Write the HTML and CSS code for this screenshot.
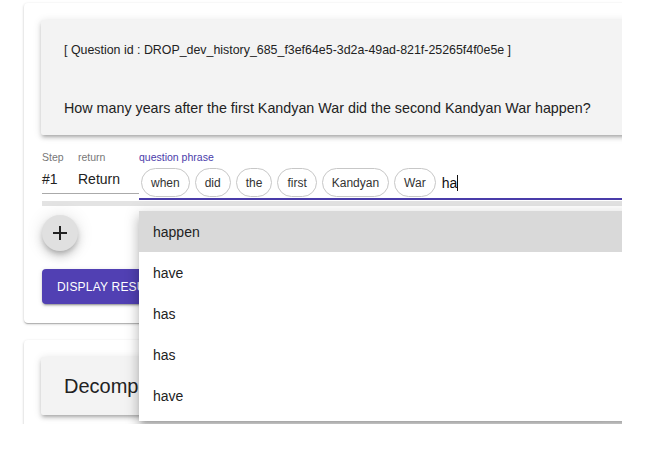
FILE: index.html
```html
<!DOCTYPE html>
<html>
<head>
<meta charset="utf-8">
<link rel="stylesheet" href="styles.css">
</head>
<body>
<div class="viewport">
  <div class="card card-first">
    <div class="paper question">
      <div class="qid">[ Question id : DROP_dev_history_685_f3ef64e5-3d2a-49ad-821f-25265f4f0e5e ]</div>
      <div class="qtext">How many years after the first Kandyan War did the second Kandyan War happen?</div>
    </div>
    <div class="step-row">
      <div class="col col-step">
        <div class="label">Step</div>
        <div class="field">#1</div>
      </div>
      <div class="col col-return">
        <div class="label">return</div>
        <div class="field">Return</div>
      </div>
      <div class="col col-phrase">
        <div class="label label-active">question phrase</div>
        <div class="phrase-field">
          <span class="chip">when</span>
          <span class="chip">did</span>
          <span class="chip">the</span>
          <span class="chip">first</span>
          <span class="chip">Kandyan</span>
          <span class="chip">War</span>
          <span class="typed">ha</span><span class="caret"></span>
        </div>
        <ul class="menu">
          <li class="menu-item selected">happen</li>
          <li class="menu-item">have</li>
          <li class="menu-item">has</li>
          <li class="menu-item">has</li>
          <li class="menu-item">have</li>
        </ul>
      </div>
    </div>
    <div class="bar"></div>
    <button class="fab" type="button">
      <svg width="14" height="14" viewBox="0 0 14 14"><path d="M7 0v14M0 7h14" stroke="#222" stroke-width="2"/></svg>
    </button>
    <button class="btn" type="button">Display Result</button>
  </div>
  <div class="card card-second">
    <div class="paper decomp">Decomposition</div>
  </div>
</div>
</body>
</html>
```

FILE: styles.css
```css
* { box-sizing: border-box; }
body {
  margin: 0;
  background: #fff;
  font-family: "Liberation Sans", Arial, sans-serif;
  color: #222;
}
.viewport {
  width: 622px;
  height: 424px;
  overflow: hidden;
  padding: 3px 0 0 24px;
}
.card {
  width: 640px;
  background: #fff;
  border-radius: 4px;
  box-shadow: 0 1px 3px rgba(0,0,0,0.2), 0 1px 1px rgba(0,0,0,0.12), 0 2px 1px -1px rgba(0,0,0,0.1);
  padding: 17px 0 19px 17px;
}
.card-second {
  margin-top: 17px;
  padding-bottom: 40px;
}
.paper {
  background: #f3f3f3;
  border-radius: 2px;
  box-shadow: 0 3px 3px -2px rgba(0,0,0,0.2), 0 3px 4px 0 rgba(0,0,0,0.14), 0 1px 8px 0 rgba(0,0,0,0.12);
}
.question {
  height: 115px;
  padding: 23px 0 0 23px;
}
.qid {
  font-size: 12.4px;
  line-height: 14px;
  color: #222;
}
.qtext {
  margin-top: 42px;
  font-size: 14.3px;
  line-height: 18px;
  color: #222;
}
.step-row {
  display: flex;
  align-items: flex-start;
  margin: 16px 0 0 1px;
}
.col { display: flex; flex-direction: column; }
.col-step { width: 36px; }
.col-return { width: 61px; }
.col-phrase { flex: 1; position: relative; }
.label {
  font-size: 10.5px;
  line-height: 12px;
  color: #777;
}
.label-active { color: #4a3caa; }
.field {
  height: 31px;
  padding-top: 8px;
  font-size: 14px;
  line-height: 16px;
  color: #222;
  border-bottom: 1px solid #aaa;
}
.phrase-field {
  display: flex;
  align-items: center;
  padding: 5px 0 1px 2px;
  border-bottom: 2px solid #4a3caa;
}
.chip {
  display: inline-flex;
  align-items: center;
  height: 29px;
  padding: 0 9px;
  margin-right: 5px;
  border: 1px solid #c7c7c7;
  border-radius: 15px;
  font-size: 12px;
  color: #333;
}
.typed {
  margin-left: 1px;
  font-size: 14px;
  color: #111;
}
.caret {
  display: inline-block;
  width: 1px;
  height: 16px;
  background: #111;
}
.menu {
  position: absolute;
  top: 60px;
  left: 0;
  width: 520px;
  margin: 0;
  padding: 0 0 5px;
  list-style: none;
  background: #fff;
  box-shadow: 0 5px 5px -3px rgba(0,0,0,0.2), 0 8px 10px 1px rgba(0,0,0,0.14), 0 3px 14px 2px rgba(0,0,0,0.12);
  z-index: 5;
}
.menu-item {
  height: 41px;
  display: flex;
  align-items: center;
  padding-left: 14px;
  font-size: 14px;
  color: #222;
}
.menu-item.selected { background: #d9d9d9; }
.bar {
  height: 5px;
  margin: 1px 0 0 1px;
  background: #e3e3e3;
}
.fab {
  display: flex;
  align-items: center;
  justify-content: center;
  width: 36px;
  height: 36px;
  margin: 9px 0 0 1px;
  border: 0;
  border-radius: 50%;
  background: #e0e0e0;
  box-shadow: 0 3px 5px -1px rgba(0,0,0,0.2), 0 6px 10px 0 rgba(0,0,0,0.14), 0 1px 18px 0 rgba(0,0,0,0.12);
  padding: 0;
}
.btn {
  display: block;
  margin: 18px 0 0 1px;
  height: 35px;
  padding: 0 15px;
  border: 0;
  border-radius: 4px;
  background: #5140b3;
  color: #fff;
  font-family: "Liberation Sans", Arial, sans-serif;
  font-size: 12px;
  text-transform: uppercase;
  letter-spacing: 0.2px;
  box-shadow: 0 3px 1px -2px rgba(0,0,0,0.2), 0 2px 2px 0 rgba(0,0,0,0.14), 0 1px 5px 0 rgba(0,0,0,0.12);
}
.decomp {
  height: 58px;
  width: 562px;
  display: flex;
  align-items: center;
  padding-left: 23px;
  font-size: 20px;
  color: #222;
}
```
